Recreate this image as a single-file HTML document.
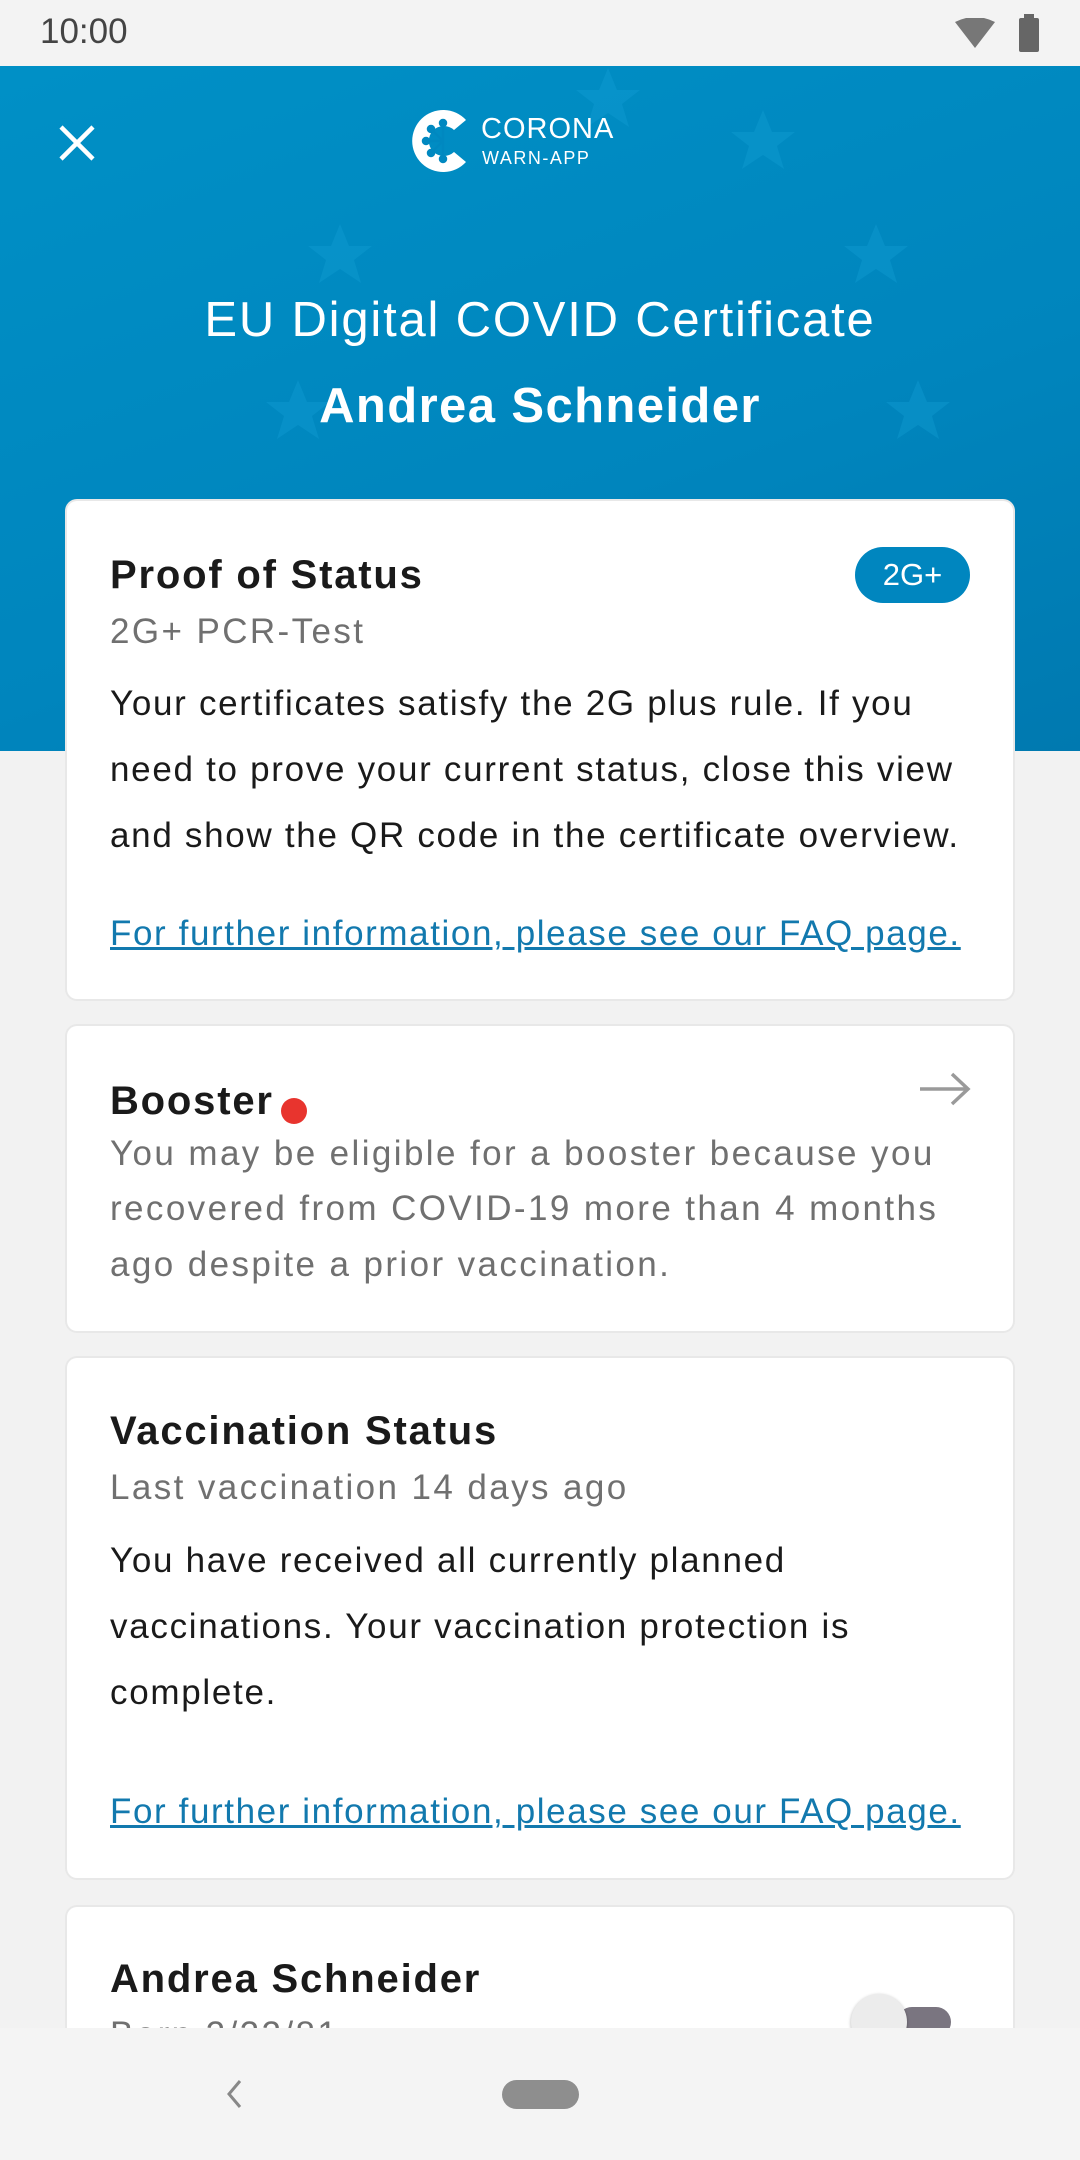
<!DOCTYPE html>
<html style="overflow:hidden;width:1080px;height:2160px"><head><meta charset="utf-8"><style>
*{margin:0;padding:0;box-sizing:border-box}
body{width:1080px;height:2160px;overflow:hidden;background:#f2f2f2;font-family:"Liberation Sans",sans-serif;position:relative}
.abs{position:absolute}
.status{left:0;top:0;width:1080px;height:66px;background:#f3f3f3}
.header{left:0;top:66px;width:1080px;height:685px;background:linear-gradient(160deg,#0090c6 0%,#0085bd 60%,#0079b0 100%);overflow:hidden}
.card{position:absolute;left:67px;width:946px;background:#fff;border-radius:10px;box-shadow:0 0 0 2px #e8e8e8}
.t{position:absolute;left:43px;white-space:nowrap}
.title{font-size:40px;font-weight:bold;color:#1a1a1a;letter-spacing:1.8px}
.sub{font-size:35px;color:#707070;letter-spacing:2.4px}
.body{font-size:35px;color:#1a1a1a;letter-spacing:1.7px}
.link{font-size:35px;color:#1279ae;text-decoration:underline;letter-spacing:1.6px}
.nav{left:0;top:2028px;width:1080px;height:132px;background:#f4f4f4}
</style></head><body>
<div class="abs status">
 <div class="abs" style="left:40px;top:12px;font-size:35px;color:#444">10:00</div>
 <svg class="abs" style="left:955px;top:18px" width="40" height="30" viewBox="0 0 40 30"><path d="M0 4 Q20 -6 40 4 L20 30 Z" fill="#777"/></svg>
 <svg class="abs" style="left:1018px;top:14px" width="22" height="38" viewBox="0 0 22 38"><rect x="6" y="0" width="10" height="5" fill="#666"/><rect x="1" y="4" width="20" height="34" rx="2" fill="#666"/></svg>
</div>
<div class="abs header">
 <svg class="abs" style="left:0;top:0" width="1080" height="685" viewBox="0 0 1080 685">
  <defs><polygon id="s" points="0,-32 9,-10 32,-10 14,4 21,27 0,13 -21,27 -14,4 -32,-10 -9,-10"/></defs>
  <g fill="#16a0d8" opacity="0.35">
   <use href="#s" transform="translate(608,34)"/>
   <use href="#s" transform="translate(763,76)"/>
   <use href="#s" transform="translate(876,190)"/>
   <use href="#s" transform="translate(340,190)"/>
   <use href="#s" transform="translate(918,346)"/>
   <use href="#s" transform="translate(298,346)"/>
  </g>
 </svg>
 <svg class="abs" style="left:58px;top:58px" width="38" height="38" viewBox="0 0 38 38"><path d="M3 3 L35 35 M35 3 L3 35" stroke="#fff" stroke-width="4.5"/></svg>
 <svg class="abs" style="left:410px;top:42px" width="66" height="66" viewBox="0 0 66 66">
  <path d="M56 12 A31 31 0 1 0 56 54 L44 44 A15 15 0 1 1 44 22 Z" fill="#fff"/>
  <g stroke="#0088c0" stroke-width="2.5" fill="#0088c0">
   <line x1="33" y1="33" x2="22" y2="22"/><line x1="33" y1="33" x2="18" y2="33"/><line x1="33" y1="33" x2="22" y2="44"/><line x1="33" y1="33" x2="33" y2="16"/><line x1="33" y1="33" x2="33" y2="50"/>
   <circle cx="21" cy="21" r="3"/><circle cx="16" cy="33" r="3"/><circle cx="21" cy="45" r="3"/><circle cx="33" cy="15" r="3"/><circle cx="33" cy="51" r="3"/>
  </g>
 </svg>
 <div class="abs" style="left:481px;top:47px;font-size:29px;color:#fff;letter-spacing:1px">CORONA</div>
 <div class="abs" style="left:482px;top:82px;font-size:18px;color:#fff;letter-spacing:1.5px">WARN-APP</div>
 <div class="abs" style="left:0;width:1080px;text-align:center;top:226px;font-size:49px;color:#fff;letter-spacing:1.8px">EU Digital COVID Certificate</div>
 <div class="abs" style="left:0;width:1080px;text-align:center;top:312px;font-size:49px;font-weight:bold;color:#fff;letter-spacing:1.4px">Andrea Schneider</div>
</div>

<div class="card" style="top:501px;height:498px">
 <div class="t title" style="top:52px">Proof of Status</div>
 <div class="abs" style="left:788px;top:46px;width:115px;height:56px;border-radius:28px;background:#0086bf;color:#fff;font-size:31px;text-align:center;line-height:56px">2G+</div>
 <div class="t sub" style="top:111px">2G+ PCR-Test</div>
 <div class="t body" style="top:183px">Your certificates satisfy the 2G plus rule. If you</div>
 <div class="t body" style="top:249px">need to prove your current status, close this view</div>
 <div class="t body" style="top:315px">and show the QR code in the certificate overview.</div>
 <div class="t link" style="top:413px">For further information, please see our FAQ page.</div>
</div>

<div class="card" style="top:1026px;height:305px">
 <div class="t title" style="top:53px">Booster</div>
 <div class="abs" style="left:214px;top:72px;width:26px;height:26px;border-radius:50%;background:#e8342e"></div>
 <svg class="abs" style="left:851px;top:46px" width="54" height="34" viewBox="0 0 54 34"><path d="M2 17 H50 M34 2 L50 17 L34 32" stroke="#9a9a9a" stroke-width="3.5" fill="none"/></svg>
 <div class="t sub" style="top:108px">You may be eligible for a booster because you</div>
 <div class="t sub" style="top:163px">recovered from COVID-19 more than 4 months</div>
 <div class="t sub" style="top:219px">ago despite a prior vaccination.</div>
</div>

<div class="card" style="top:1358px;height:520px">
 <div class="t title" style="top:51px">Vaccination Status</div>
 <div class="t sub" style="top:110px">Last vaccination 14 days ago</div>
 <div class="t body" style="top:183px">You have received all currently planned</div>
 <div class="t body" style="top:249px">vaccinations. Your vaccination protection is</div>
 <div class="t body" style="top:315px">complete.</div>
 <div class="t link" style="top:434px">For further information, please see our FAQ page.</div>
</div>

<div class="card" style="top:1907px;height:240px">
 <div class="t title" style="top:50px">Andrea Schneider</div>
 <div class="t sub" style="top:108px">Born 2/22/81</div>
 <div class="abs" style="left:830px;top:100px;width:54px;height:30px;border-radius:15px;background:#7a7580"></div>
 <div class="abs" style="left:784px;top:87px;width:56px;height:56px;border-radius:50%;background:#ececec;box-shadow:0 1px 3px rgba(0,0,0,.3)"></div>
</div>

<div class="abs nav">
 <svg class="abs" style="left:224px;top:50px" width="20" height="32" viewBox="0 0 20 32"><path d="M16 3 L5 16 L16 29" stroke="#888" stroke-width="3" fill="none"/></svg>
 <div class="abs" style="left:502px;top:52px;width:77px;height:29px;border-radius:15px;background:#8e8e8e"></div>
</div>
</body></html>
